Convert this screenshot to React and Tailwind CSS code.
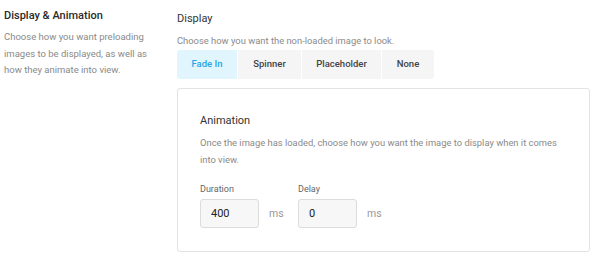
import { useState } from 'react'

const tabs = ['Fade In', 'Spinner', 'Placeholder', 'None']
const tabWidths = ['w-[60px]', 'w-[63px]', 'w-[79px]', 'w-[52px]']

function Field({ label, value }) {
  return (
    <div>
      <label className="block text-[9px] leading-[12px] text-[#666]">{label}</label>
      <div className="mt-[4px] flex items-center">
        <input
          defaultValue={value}
          className="h-[29px] w-[59px] rounded-[3px] border border-[#dcdcdc] bg-[#f7f7f7] px-[10px] text-[11px] text-[#222] outline-none"
        />
        <span className="ml-[10px] w-[29px] text-[10.5px] text-[#999]">ms</span>
      </div>
    </div>
  )
}

export default function App() {
  const [active, setActive] = useState('Fade In')

  return (
    <div className="flex h-[258px] w-[600px] bg-white font-['Roboto',sans-serif]">
      <div className="w-[177px] pl-[4px] pt-[9px]">
        <h2 className="text-[11px] font-medium leading-[14px] text-[#2a2a2a]">Display &amp; Animation</h2>
        <p className="mt-[6px] w-[150px] text-[9.5px] leading-[16.7px] text-[#8a8a8a]">
          Choose how you want preloading images to be displayed, as well as how they animate into view.
        </p>
      </div>
      <div className="flex-1 pt-[12px] pr-[10px]">
        <h3 className="text-[11px] leading-[14px] text-[#333]">Display</h3>
        <p className="mt-[7px] text-[9.4px] leading-[16px] text-[#8a8a8a]">Choose how you want the non-loaded image to look.</p>
        <div className="mt-[1px] flex h-[29px] gap-px">
          {tabs.map((t, i) => (
            <button
              key={t}
              type="button"
              onClick={() => setActive(t)}
              className={
                (active === t ? 'bg-[#e1f5fe] text-[#29a6e3] ' : 'bg-[#f5f5f5] text-[#444] ') +
                (i === 0 ? 'rounded-l-[3px] ' : '') +
                (i === tabs.length - 1 ? 'rounded-r-[3px] ' : '') +
                tabWidths[i] +
                ' text-[9.5px] font-medium'
              }
            >
              {t}
            </button>
          ))}
        </div>
        <div className="mt-[9px] h-[164px] rounded-[3px] border border-[#e3e3e3] px-[22px] pt-[25px]">
          <h4 className="text-[11px] leading-[14px] text-[#333]">Animation</h4>
          <p className="mt-[7px] text-[9.4px] leading-[16.7px] text-[#8a8a8a]">
            Once the image has loaded, choose how you want the image to display when it comes into view.
          </p>
          <div className="mt-[15px] flex">
            <Field label="Duration" value="400" />
            <Field label="Delay" value="0" />
          </div>
        </div>
      </div>
    </div>
  )
}
